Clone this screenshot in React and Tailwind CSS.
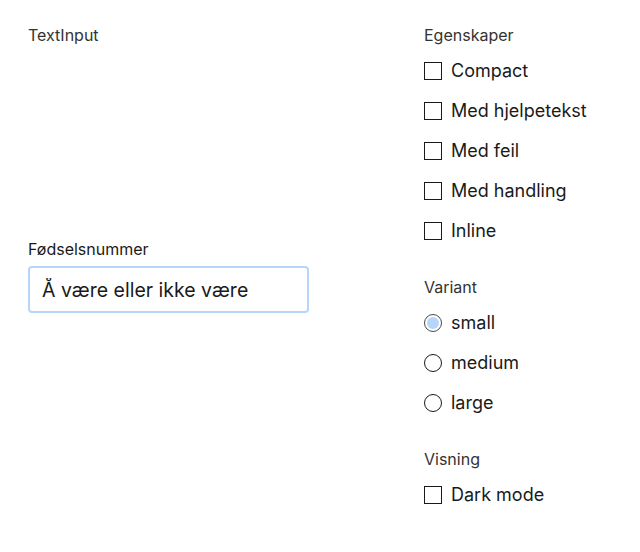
import React, { useEffect, useRef, useState } from "react";

const egenskaper = ["Compact", "Med hjelpetekst", "Med feil", "Med handling", "Inline"];
const varianter = ["small", "medium", "large"];

function Checkbox({ label, checked, onChange }) {
  return (
    <label className="flex items-center gap-[9px] h-6 cursor-pointer">
      <input
        type="checkbox"
        checked={checked}
        onChange={onChange}
        className="appearance-none w-[18px] h-[18px] border border-[#1a1a1a] bg-white shrink-0 checked:bg-[#1a1a1a]"
      />
      <span className="text-[18px] leading-6 text-[#1a1a1a]">{label}</span>
    </label>
  );
}

function Radio({ label, checked, onChange }) {
  return (
    <label className="flex items-center gap-[9px] h-6 cursor-pointer">
      <span
        className={
          checked
            ? "w-[18px] h-[18px] rounded-full border border-[#4a4a4a] bg-white p-[2px] shrink-0"
            : "w-[18px] h-[18px] rounded-full border border-[#1a1a1a] bg-white shrink-0"
        }
      >
        {checked && <span className="block w-full h-full rounded-full bg-[#b5d5fb]" />}
      </span>
      <input type="radio" checked={checked} onChange={onChange} className="sr-only" />
      <span className="text-[18px] leading-6 text-[#1a1a1a]">{label}</span>
    </label>
  );
}

export default function App() {
  const [flags, setFlags] = useState({});
  const [variant, setVariant] = useState("small");
  const [dark, setDark] = useState(false);
  const [value, setValue] = useState("Å være eller ikke være");
  const inputRef = useRef(null);

  useEffect(() => {
    const el = inputRef.current;
    if (el) {
      el.focus();
      el.setSelectionRange(el.value.length, el.value.length);
    }
  }, []);

  return (
    <div
      className="w-[640px] h-[552px] bg-white flex px-7 pt-[23px]"
      style={{ fontFamily: "Inter, 'Liberation Sans', sans-serif" }}
    >
      <div className="w-[280px] flex flex-col">
        <p className="text-[16px] leading-6 text-[#333]">TextInput</p>
        <label className="mt-[190px] flex flex-col">
          <span className="text-[16px] leading-6 text-[#1a1a1a] mb-[5px]">Fødselsnummer</span>
          <input
            ref={inputRef}
            value={value}
            onChange={(e) => setValue(e.target.value)}
            className="h-[47px] w-[281px] rounded-[4px] border-2 border-[#b5d5fb] px-3 text-[19.5px] text-[#1a1a1a] caret-black outline-none"
            style={{ fontFamily: "Inter, 'Liberation Sans', sans-serif" }}
          />
        </label>
      </div>

      <div className="ml-[116px] flex flex-col">
        <p className="text-[16px] leading-6 text-[#333]">Egenskaper</p>
        <div className="mt-3 flex flex-col gap-4">
          {egenskaper.map((e) => (
            <Checkbox
              key={e}
              label={e}
              checked={!!flags[e]}
              onChange={() => setFlags((prev) => ({ ...prev, [e]: !prev[e] }))}
            />
          ))}
        </div>

        <p className="mt-8 text-[16px] leading-6 text-[#333]">Variant</p>
        <div className="mt-3 flex flex-col gap-4">
          {varianter.map((v) => (
            <Radio key={v} label={v} checked={variant === v} onChange={() => setVariant(v)} />
          ))}
        </div>

        <p className="mt-8 text-[16px] leading-6 text-[#333]">Visning</p>
        <div className="mt-3">
          <Checkbox label="Dark mode" checked={dark} onChange={() => setDark(!dark)} />
        </div>
      </div>
    </div>
  );
}
